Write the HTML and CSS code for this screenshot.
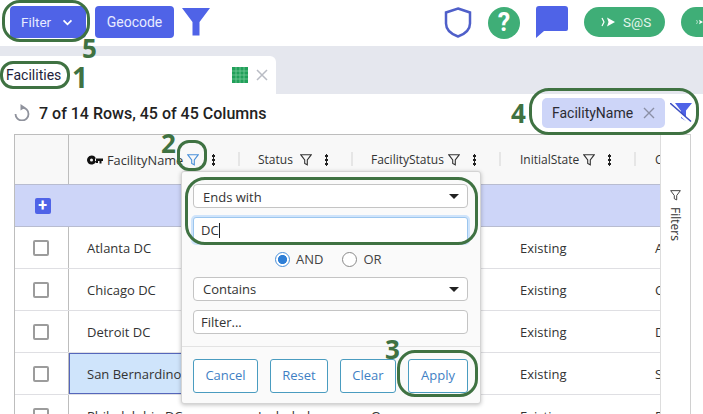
FILE: index.html
```html
<!DOCTYPE html>
<html lang="en">
<head>
<meta charset="utf-8">
<title>Facilities</title>
<link rel="stylesheet" href="styles.css">
</head>
<body>
<header class="topbar">
  <button class="btn btn-filter">Filter
    <svg class="chev" viewBox="0 0 12 8" width="11" height="7"><path d="M1.500 1.500 6 6l4.500-4.500" fill="none" stroke="#fff" stroke-width="2"/></svg>
  </button>
  <button class="btn btn-geo">Geocode</button>
  <svg class="funnel" viewBox="0 0 28 28" width="28" height="28"><path d="M0 0h28L17.500 14v13.500h-7V14z" fill="#4f63e7"/></svg>
  <div class="spacer"></div>
  <svg class="shield" viewBox="0 0 28 31" width="28" height="31"><path d="M14 1.500 26 5.500v11c0 6-5 10.500-12 13-7-2.500-12-7-12-13v-11z" fill="none" stroke="#4f5fc9" stroke-width="2.500"/></svg>
  <div class="help">?</div>
  <svg class="chat" viewBox="0 0 32 32" width="32" height="32"><path d="M3 0h26a3 3 0 0 1 3 3v20a2 2 0 0 1-2 2H8l-8 7V3a3 3 0 0 1 3-3z" fill="#4f63e7"/></svg>
  <div class="pill"><svg viewBox="0 0 14 10" width="14" height="10"><path d="M1 1l2 4-2 4" fill="none" stroke="#fff" stroke-width="1.200"/><path d="M6 .5l8 4.500-8 4.500 1.500-4.500z" fill="#fff"/></svg>S@S</div>
  <div class="pill pill-cut"><svg viewBox="0 0 14 10" width="14" height="10"><path d="M1 1l2 4-2 4" fill="none" stroke="#fff" stroke-width="1.200"/><path d="M6 .5l8 4.500-8 4.500 1.500-4.500z" fill="#fff"/></svg></div>
</header>

<nav class="tabband">
  <div class="tab">
    <span class="tab-name">Facilities</span>
    <svg class="tab-grid" viewBox="0 0 16 16" width="16" height="16"><rect width="16" height="16" fill="#22a05a"/><path d="M4 0v16M8 0v16M12 0v16M0 4h16M0 8h16M0 12h16" stroke="#7fd0a0" stroke-width=".7"/></svg>
    <svg class="tab-x" viewBox="0 0 12 12" width="12" height="12"><path d="M1 1l10 10M11 1 1 11" stroke="#b9bcc4" stroke-width="1.500"/></svg>
  </div>
</nav>

<main class="content">
  <div class="statusbar">
    <svg class="refresh" viewBox="0 0 16 17" width="16" height="17"><path d="M8 3.500a6.500 6.500 0 1 1-6.500 6.500" fill="none" stroke="#8f929c" stroke-width="1.800"/><path d="M6.500 0 11.500 3.500 6.500 6.500z" fill="#8f929c"/></svg>
    <span class="rowcount">7 of 14 Rows, 45 of 45 Columns</span>
    <div class="spacer"></div>
    <div class="chip">FacilityName
      <svg viewBox="0 0 12 12" width="12" height="12"><path d="M1 1l10 10M11 1 1 11" stroke="#8a8fa5" stroke-width="1.400"/></svg>
    </div>
    <svg class="funnel-off" viewBox="0 0 22 20" width="22" height="20"><path d="M5 0h17l-6 7.500V18l-5-3V8z" fill="#4f63e7"/><path d="M0 1.500l20 18.500" stroke="#fff" stroke-width="3"/><path d="M0 0l21 18.500" stroke="#3c4ec0" stroke-width="1.500"/></svg>
  </div>

  <div class="gridwrap">
    <div class="table">
      <div class="row head">
        <div class="c c0"></div>
        <div class="c c1">
          <svg class="key" viewBox="0 0 16 10" width="16" height="10"><path d="M4.500 .5a4.500 4.500 0 1 1-4.200 6 4.500 4.500 0 0 1 4.200-6zm0 3a1.500 1.500 0 1 0 0 3 1.500 1.500 0 0 0 0-3zM8 3.500h8V6h-1.500v2.500h-2V6H11v2H9V6H8z" fill="#111" fill-rule="evenodd"/></svg>
          <span class="hname hname-key">FacilityName</span>
          <svg class="hf hf-active" viewBox="0 0 12 12" width="12" height="12"><path d="M.7.7h10.600L7.300 6v4.800l-2.600-1.300V6z" fill="none" stroke="#4a90d9" stroke-width="1.100"/></svg>
          <i class="dots dots-wide"></i>
        </div>
        <div class="c c2"><span class="hname">Status</span>
          <svg class="hf hf-status" viewBox="0 0 12 12" width="12" height="12"><path d="M.7.700h10.600L7.300 6v4.800l-2.600-1.300V6z" fill="none" stroke="#333" stroke-width="1.100"/></svg>
          <i class="dots"></i>
        </div>
        <div class="c c3"><span class="hname">FacilityStatus</span>
          <svg class="hf" viewBox="0 0 12 12" width="12" height="12"><path d="M.7.700h10.600L7.300 6v4.800l-2.600-1.300V6z" fill="none" stroke="#333" stroke-width="1.100"/></svg>
          <i class="dots"></i>
        </div>
        <div class="c c4"><span class="hname">InitialState</span>
          <svg class="hf" viewBox="0 0 12 12" width="12" height="12"><path d="M.7.700h10.600L7.300 6v4.800l-2.600-1.300V6z" fill="none" stroke="#333" stroke-width="1.100"/></svg>
          <i class="dots"></i>
        </div>
        <div class="c c5"><span class="hname">City</span></div>
      </div>
      <div class="row add">
        <div class="c c0"><span class="plus">+</span></div>
      </div>
      <div class="row">
        <div class="c c0"><i class="check"></i></div>
        <div class="c c1">Atlanta DC</div><div class="c c2"></div><div class="c c3"></div><div class="c c4">Existing</div><div class="c c5">Atlanta</div>
      </div>
      <div class="row">
        <div class="c c0"><i class="check"></i></div>
        <div class="c c1">Chicago DC</div><div class="c c2"></div><div class="c c3"></div><div class="c c4">Existing</div><div class="c c5">Chicago</div>
      </div>
      <div class="row">
        <div class="c c0"><i class="check"></i></div>
        <div class="c c1">Detroit DC</div><div class="c c2"></div><div class="c c3"></div><div class="c c4">Existing</div><div class="c c5">Detroit</div>
      </div>
      <div class="row">
        <div class="c c0"><i class="check"></i></div>
        <div class="c c1 selected">San Bernardino DC</div><div class="c c2"></div><div class="c c3"></div><div class="c c4">Existing</div><div class="c c5">San Bernardino</div>
      </div>
      <div class="row">
        <div class="c c0"><i class="check"></i></div>
        <div class="c c1">Philadelphia DC</div><div class="c c2">Included</div><div class="c c3">Open</div><div class="c c4">Existing</div><div class="c c5">Philadelphia</div>
      </div>
    </div>
    <aside class="sidepanel">
      <svg viewBox="0 0 12 12" width="11" height="11"><path d="M.7.700h10.600L7.300 6v4.800l-2.600-1.300V6z" fill="none" stroke="#333" stroke-width="1"/></svg>
      <span class="sidetext">Filters</span>
    </aside>
  </div>
</main>

<section class="popup">
  <div class="field select select-first">Ends with<i class="caret"></i></div>
  <div class="field focus">DC<span class="cursor"></span></div>
  <div class="radios">
    <span class="radio on"></span><span class="rlabel">AND</span>
    <span class="radio"></span><span class="rlabel">OR</span>
  </div>
  <div class="field select">Contains<i class="caret"></i></div>
  <div class="field plain">Filter...</div>
  <div class="divider"></div>
  <div class="actions">
    <button class="act a-cancel">Cancel</button>
    <button class="act a-reset">Reset</button>
    <button class="act a-clear">Clear</button>
    <button class="act a-apply">Apply</button>
  </div>
</section>

<div class="mark m-filter"></div>
<div class="mark m-tab"></div>
<div class="mark m-icon"></div>
<div class="mark m-fields"></div>
<div class="mark m-apply"></div>
<div class="mark m-chips"></div>
<span class="num n5">5</span>
<span class="num n1">1</span>
<span class="num n2">2</span>
<span class="num n3">3</span>
<span class="num n4">4</span>
</body>
</html>
```
FILE: styles.css
```css
* { box-sizing: border-box; }
html, body { margin: 0; height: 414px; overflow: hidden; background: #fff; }
body { position: relative; font-family: Roboto, sans-serif; color: #222; }
button { font-family: inherit; }
.spacer { flex: 1; }

.topbar { height: 46px; display: flex; align-items: flex-start; padding: 6px 0 0 10px; overflow: hidden; }
.btn { height: 32px; border: 0; border-radius: 4px; background: #4f63e7; color: #e8ebff; font-size: 14px; padding: 0; }
.btn-filter { width: 76px; display: flex; align-items: center; padding-left: 11px; font-size: 13.500px; }
.chev { margin-left: 11px; }
.btn-geo { width: 79px; margin-left: 9px; }
.funnel { margin: 2px 0 0 8px; }
.shield { margin: 1px 0 0 0; }
.help { width: 32px; height: 32px; margin: 1px 0 0 16px; border-radius: 50%; background: #3fae77; color: #fff; font: 700 25px/32px Roboto, sans-serif; text-align: center; }
.chat { margin: 0 0 0 16px; }
.pill { width: 81px; height: 30px; margin: 1px 0 0 16px; border-radius: 15px; background: #3fae77; color: #e4f5ec; font-size: 13.500px; display: flex; align-items: center; gap: 8px; padding-left: 17px; flex: none; }
.pill-cut { width: 22px; padding-left: 15px; margin-left: 16px; border-radius: 15px 0 0 15px; overflow: hidden; }

.tabband { height: 48px; background: #e5e7ee; padding-top: 10px; }
.tab { width: 276px; height: 38px; background: #fff; border-radius: 0 6px 0 0; display: flex; align-items: center; padding: 0 8px 0 6px; }
.tab-name { font-size: 14px; color: #1d1d3a; }
.tab-grid { margin-left: auto; }
.tab-x { margin-left: 8px; }

.content { padding: 0 11px 0 14px; }
.statusbar { height: 40px; display: flex; align-items: center; padding-bottom: 2px; }
.refresh { margin-bottom: 1px; }
.rowcount { margin-left: 9px; font-size: 16px; font-weight: 500; color: #222; }
.chip { width: 123px; height: 30px; background: #cdd5f8; border-radius: 5px; font-size: 14px; display: flex; align-items: center; justify-content: space-between; padding: 0 10px; color: #2b2b33; }
.funnel-off { margin: 0 0 0 5px; flex: none; }

.gridwrap { display: flex; height: 300px; }
.table { width: 646px; border: 1px solid #bdbdbd; border-right: 0; border-bottom: 0; font: 13px "Open Sans", sans-serif; color: #333; overflow: hidden; }
.row { display: flex; height: 42px; border-bottom: 1px solid #dfdfe3; }
.head { height: 49px; background: #f8f8f8; border-bottom: 0; }
.add { height: 43px; background: #cdd5f8; border-top: 1px solid #b8bcd0; border-bottom: 1px solid #b8bcd0; }
.c { flex: none; display: flex; align-items: center; white-space: nowrap; overflow: hidden; padding-left: 19px; position: relative; }
.c0 { width: 54px; padding: 0 2px 0 0; justify-content: center; border-right: 1px solid #bdbdbd; }
.add .c0 { border-right: 0; padding: 0 0 0 1px; }
.c1 { width: 171px; padding-left: 18px; }
.c2 { width: 113px; padding-left: 18px; }
.c3 { width: 148px; padding-left: 18px; }
.c4 { width: 135px; padding-left: 19px; }
.c5 { width: 25px; }
.head .c { font-size: 12px; }
.head .c .hname-key { font-size: 12.800px; }
.head .c2::after, .head .c3::after, .head .c4::after, .head .c1::after { content: ""; position: absolute; right: 0; top: 17px; height: 14px; width: 2px; background: #e6e6e6; }
.key { margin-right: 4px; flex: none; }
.hf { margin-left: 4px; flex: none; }
.hf-status { margin-left: 7px; }
.hf-active { margin-left: 4px; }
.dots { width: 3px; height: 12px; margin-left: 13px; flex: none; background: radial-gradient(circle, #222 1.500px, transparent 1.700px) 0 0 / 3px 4px; }
.plus { width: 16px; height: 16px; background: #4f63e7; color: #fff; border-radius: 2px; font: 700 16px/15px Roboto, sans-serif; text-align: center; }
.check { width: 16px; height: 16px; border: 2px solid #9c9c9c; border-radius: 2px; background: #fff; }
.selected { background: #cfe4fb; border: 1px solid #5566bb; padding-left: 17px; }

.sidepanel { width: 31px; border: 1px solid #d0d0d0; border-left: 1px solid #ddd; border-bottom: 0; background: #fff; display: flex; flex-direction: column; align-items: center; padding-top: 55px; gap: 6px; }
.sidetext { writing-mode: vertical-rl; font: 12px "Open Sans", sans-serif; color: #333; }

.popup { position: absolute; left: 181px; top: 171px; width: 300px; height: 233px; background: #fafafa; border: 1px solid #d4d4d4; border-radius: 3px; box-shadow: 0 1px 4px rgba(0,0,0,.25); padding: 12px 12px 0 11px; font: 13px "Open Sans", sans-serif; color: #333; }
.field { height: 24px; background: #fff; border: 1px solid #c4c4c4; border-radius: 4px; display: flex; align-items: center; padding-left: 7px; position: relative; }
.select { padding: 0 0 0 9px; }
.select-first { padding-top: 1px; }
.caret { position: absolute; right: 8px; top: 9px; border: 5px solid transparent; border-top: 5px solid #222; border-bottom: 0; }
.focus { height: 26px; margin-top: 9px; border: 1px solid #9cc6ee; box-shadow: 0 0 0 2px #cfe4fb; border-radius: 3px; }
.cursor { width: 1px; height: 15px; background: #222; }
.plain { margin-top: 9px; }
.radios { height: 34px; display: flex; align-items: center; padding: 0 0 2px 82px; color: #444; }
.radio { width: 15px; height: 15px; border: 1.500px solid #8a8a8a; border-radius: 50%; background: #fff; flex: none; }
.radio.on { border-color: #4a90d9; background: radial-gradient(circle, #2f7fd6 4.300px, #fff 4.800px); }
.rlabel { margin-left: 6px; margin-right: 19px; }
.divider { height: 1px; background: #e3e3e3; margin: 12px -11px 0 -11px; width: 298px; }
.actions { display: flex; gap: 12px; margin-top: 12px; }
.act { height: 34px; background: #fff; border: 1px solid #4a9cc0; border-radius: 3px; color: #3f7fc4; font: 500 13px/30px "Open Sans", sans-serif; padding: 0 0 2px; }
.a-cancel { width: 65px; }
.a-reset { width: 58px; }
.a-clear { width: 56px; }
.a-apply { width: 60px; }

.mark { position: absolute; border: 3px solid #3f7242; background: transparent; }
.m-filter { left: 2px; top: 0; width: 88px; height: 42px; border-radius: 18px; }
.m-tab { left: 0; top: 61px; width: 70px; height: 28px; border-radius: 13px; }
.m-icon { left: 177px; top: 140px; width: 30px; height: 31px; border-radius: 12px; }
.m-fields { left: 185px; top: 177px; width: 293px; height: 68px; border-radius: 20px; }
.m-apply { left: 397px; top: 350px; width: 81px; height: 47px; border-radius: 18px; }
.m-chips { left: 529px; top: 88px; width: 170px; height: 47px; border-radius: 20px; }
.num { position: absolute; font: 700 26px/26px "Open Sans", sans-serif; color: #3f7242; }
.n5 { left: 82px; top: 35px; }
.n1 { left: 72px; top: 64px; font-size: 28px; }
.n2 { left: 161px; top: 130px; }
.n3 { left: 385px; top: 336px; }
.n4 { left: 511px; top: 100px; }
```
